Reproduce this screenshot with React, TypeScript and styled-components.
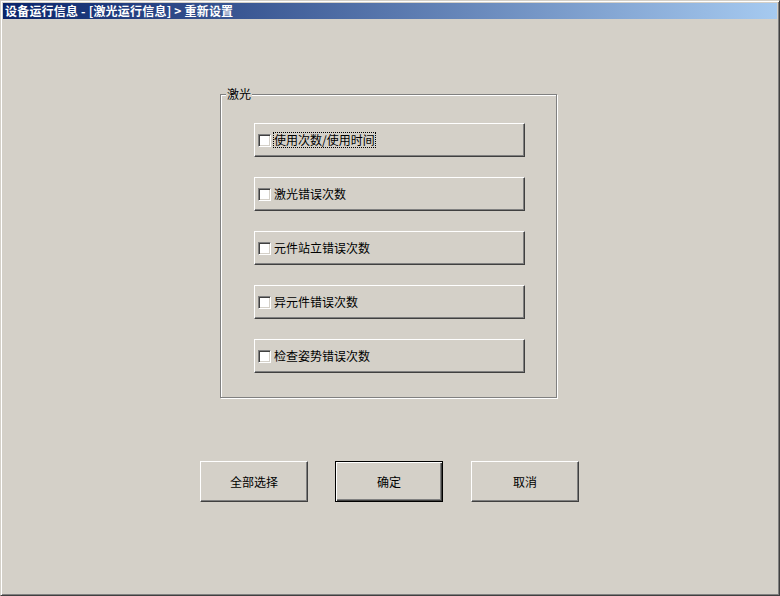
import React from "react";
import styled, { createGlobalStyle } from "styled-components";

const Global = createGlobalStyle`
  html, body { margin: 0; padding: 0; background: #d4d0c8; }
  body { font-family: "Noto Sans CJK SC", "Noto Sans", sans-serif; font-size: 12px; }
  * { box-sizing: border-box; }
`;

const Window = styled.div`
  width: 780px;
  height: 596px;
  background: #d4d0c8;
  border: 1px solid;
  border-color: #d4d0c8 #404040 #404040 #d4d0c8;
  box-shadow: inset 1px 1px #ffffff, inset -1px -1px #808080;
  padding: 2px;
  display: flex;
  flex-direction: column;
`;

const TitleBar = styled.div`
  height: 16px;
  background: linear-gradient(to right, #0a246a, #a6caf0);
  color: #ffffff;
  font-weight: bold;
  font-size: 12px;
  line-height: 16px;
  padding-left: 2px;
  white-space: nowrap;
  letter-spacing: 0.2px;
`;

const Body = styled.div`
  flex: 1;
  display: flex;
  flex-direction: column;
  padding-top: 75px;
`;

const GroupBox = styled.div`
  position: relative;
  margin-left: 217px;
  width: 337px;
  height: 304px;
  border: 1px solid #808080;
  box-shadow: inset 1px 1px #ffffff, 1px 1px #ffffff;
  padding: 28px 0 0 33px;
  display: flex;
  flex-direction: column;
  gap: 20px;
`;

const Legend = styled.span`
  position: absolute;
  top: -8px;
  left: 5px;
  padding: 0 1px;
  background: #d4d0c8;
  color: #000;
  font-size: 12px;
  line-height: 14px;
`;

const CheckButton = styled.label`
  width: 271px;
  height: 34px;
  background: #d4d0c8;
  border: 1px solid;
  border-color: #ffffff #404040 #404040 #ffffff;
  box-shadow: inset -1px -1px #808080;
  display: flex;
  align-items: center;
  padding-left: 3px;
  gap: 2px;
  color: #000;
  font-size: 12px;
`;

const Box = styled.span`
  width: 13px;
  height: 13px;
  background: #ffffff;
  border: 1px solid;
  border-color: #808080 #ffffff #ffffff #808080;
  box-shadow: inset 1px 1px #404040, inset -1px -1px #d4d0c8;
  flex: none;
`;

const Caption = styled.span<{ $focused?: boolean }>`
  line-height: 14px;
  padding: 1px 1px;
  outline: ${(p) => (p.$focused ? "1px dotted #000" : "none")};
  outline-offset: -1px;
`;

const ButtonRow = styled.div`
  display: flex;
  gap: 27px;
  margin-top: 63px;
  padding-left: 197px;
`;

const PushButton = styled.button<{ $default?: boolean }>`
  width: 108px;
  height: 41px;
  background: #d4d0c8;
  font-family: "Noto Sans CJK SC", "Noto Sans", sans-serif;
  font-size: 12px;
  color: #000;
  padding: 0;
  border: 1px solid;
  border-color: ${(p) =>
    p.$default ? "#000 #000 #000 #000" : "#ffffff #404040 #404040 #ffffff"};
  box-shadow: ${(p) =>
    p.$default
      ? "inset 1px 1px #ffffff, inset -1px -1px #404040, inset -2px -2px #808080"
      : "inset -1px -1px #808080"};
  & + & + & {
    margin-left: 1px;
  }
`;

const items = [
  "使用次数/使用时间",
  "激光错误次数",
  "元件站立错误次数",
  "异元件错误次数",
  "检查姿势错误次数",
];

export default function App() {
  return (
    <>
      <Global />
      <Window>
        <TitleBar>设备运行信息 - [激光运行信息] &gt; 重新设置</TitleBar>
        <Body>
          <GroupBox>
            <Legend>激光</Legend>
            {items.map((t, i) => (
              <CheckButton key={t}>
                <Box />
                <Caption $focused={i === 0}>{t}</Caption>
              </CheckButton>
            ))}
          </GroupBox>
          <ButtonRow>
            <PushButton>全部选择</PushButton>
            <PushButton $default>确定</PushButton>
            <PushButton>取消</PushButton>
          </ButtonRow>
        </Body>
      </Window>
    </>
  );
}
